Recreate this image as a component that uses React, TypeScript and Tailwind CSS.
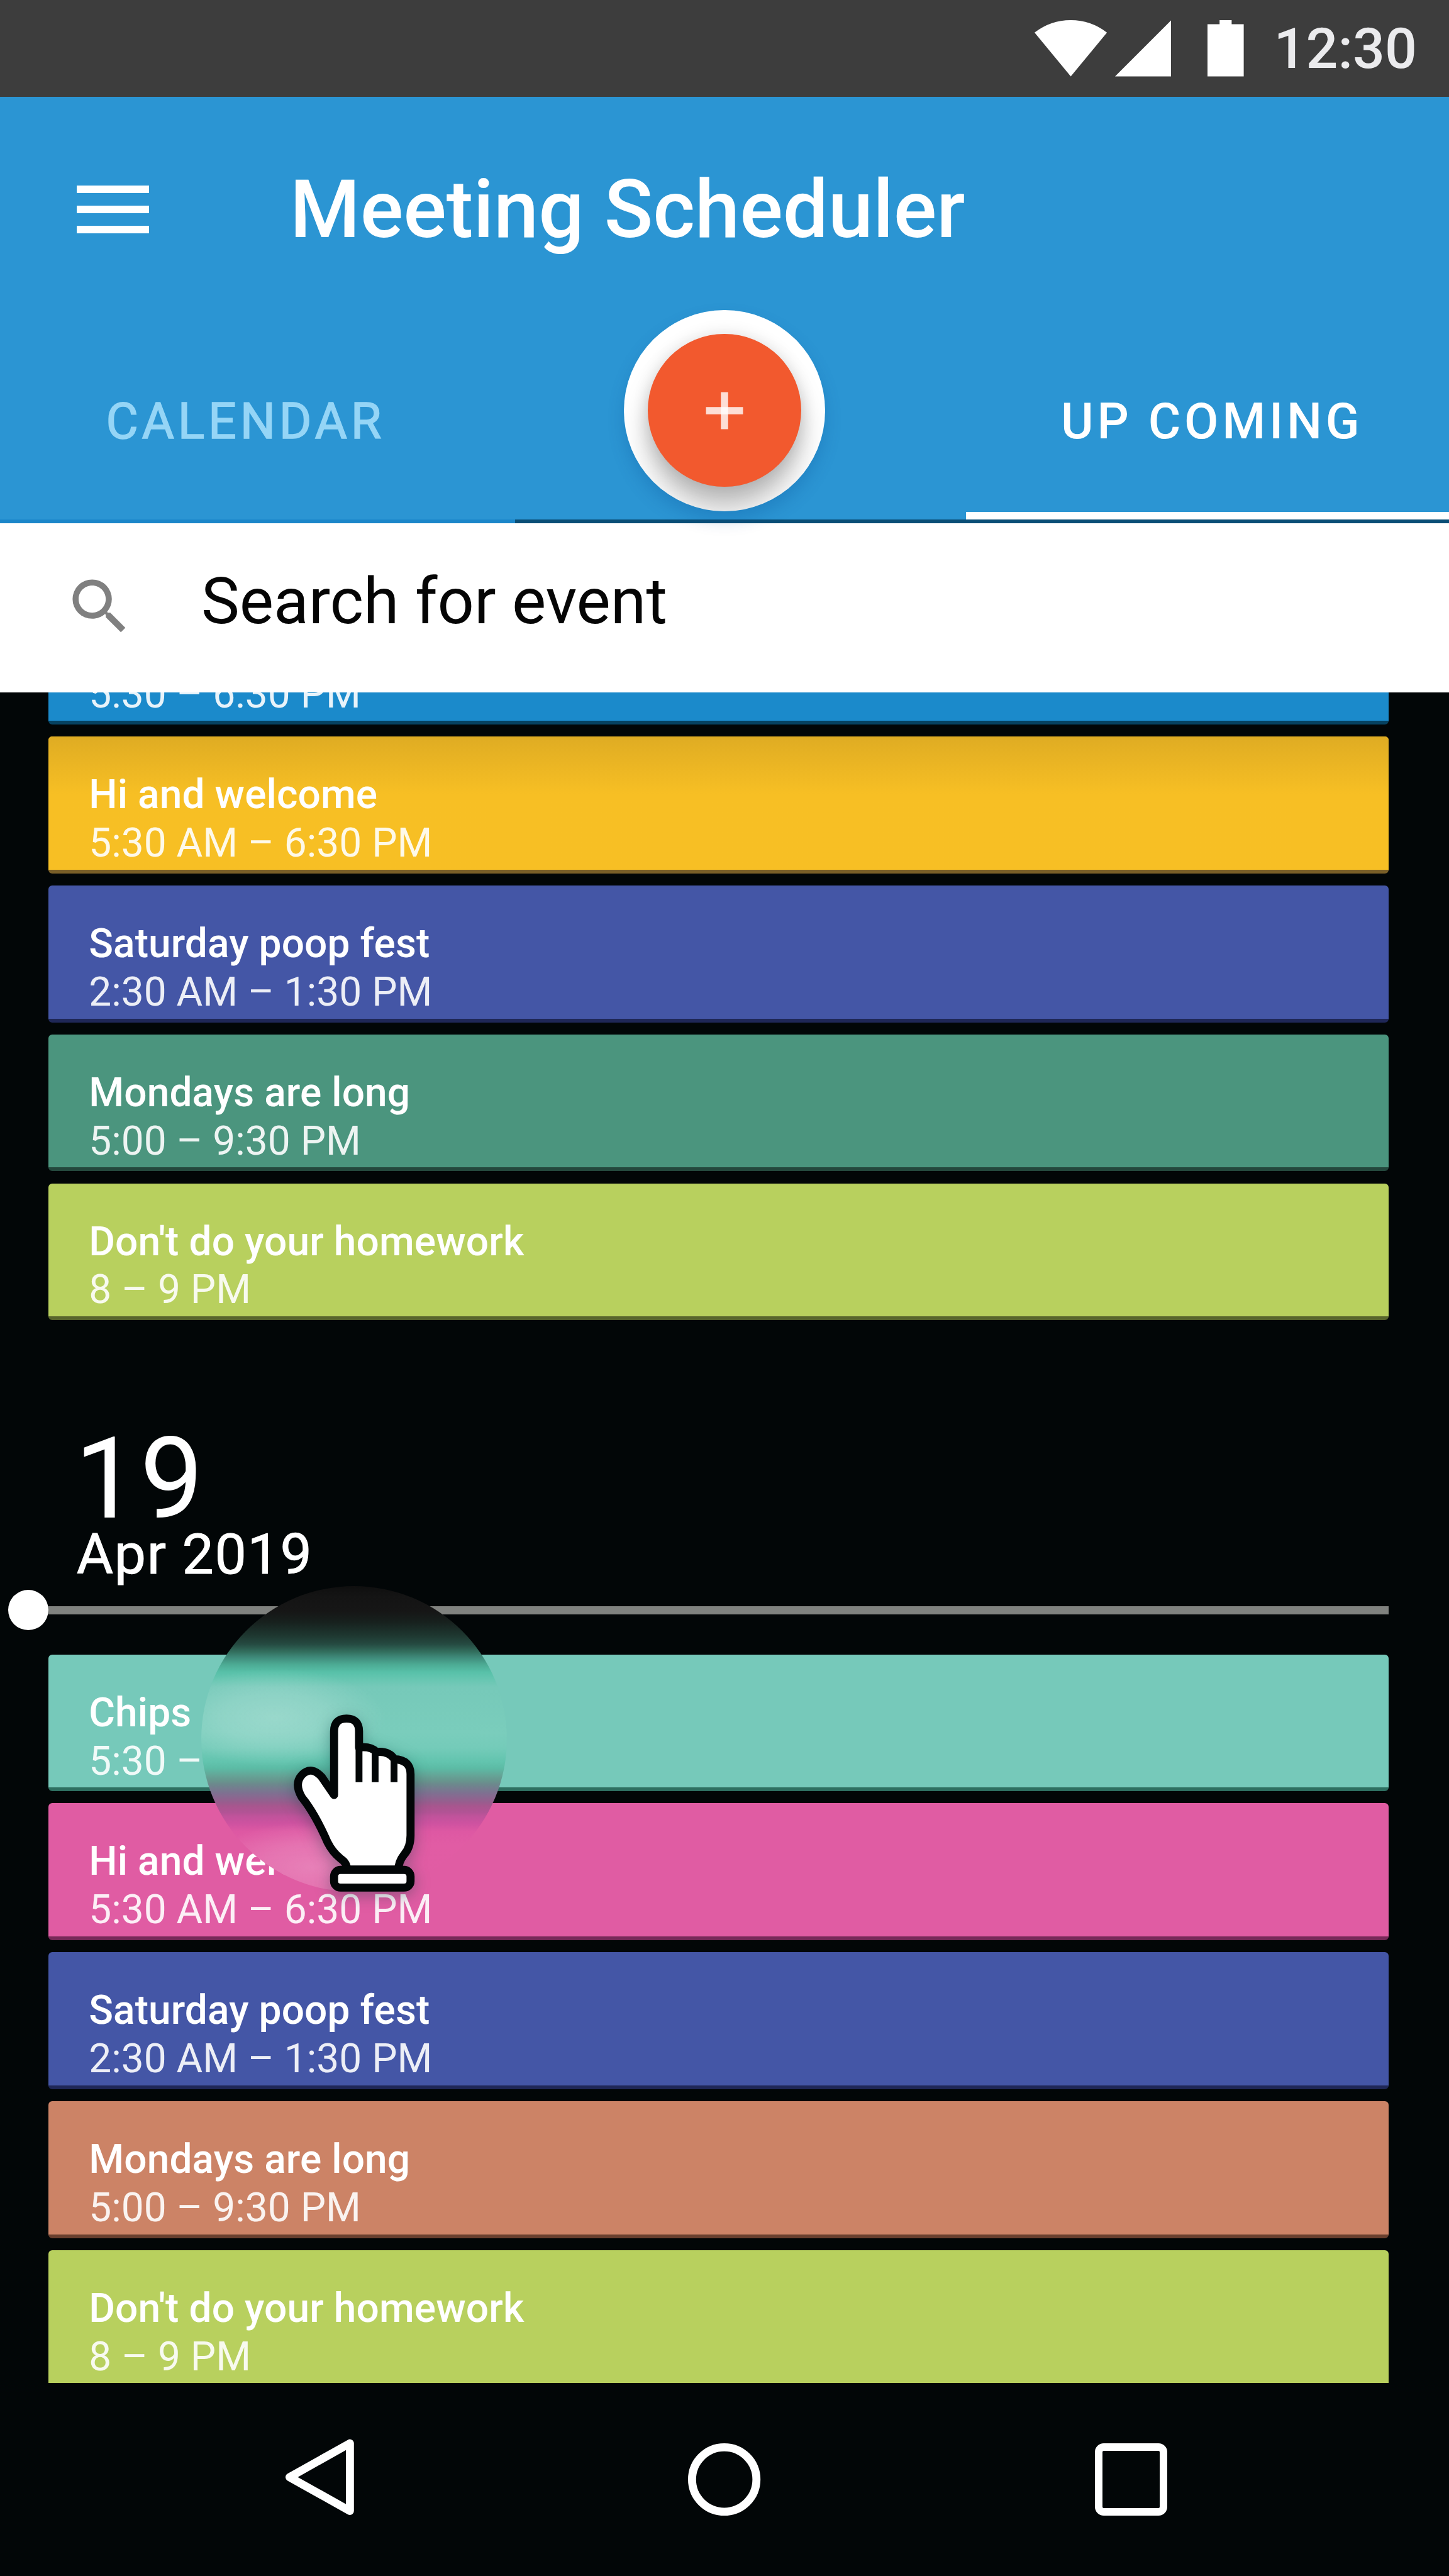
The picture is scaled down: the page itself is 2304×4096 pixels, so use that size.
type Meeting = { title?: string; time: string; tone: string };

const firstDay: Meeting[] = [
  { time: "5:30 – 6:30 PM", tone: "bg-[#1b8acb] border-[#064261]" },
  {
    title: "Hi and welcome",
    time: "5:30 AM – 6:30 PM",
    tone: "bg-[#f7bf24] border-[#7a5f28] bg-linear-to-b from-[#dfac23] via-[#f7bf24] via-42% to-[#f7bf24]",
  },
  { title: "Saturday poop fest", time: "2:30 AM – 1:30 PM", tone: "bg-[#4456a6] border-[#1f2757]" },
  { title: "Mondays are long", time: "5:00 – 9:30 PM", tone: "bg-[#4b957e] border-[#24483d]" },
  { title: "Don't do your homework", time: "8 – 9 PM", tone: "bg-[#b8d05e] border-[#58652c]" },
];

const secondDay: Meeting[] = [
  { title: "Chips", time: "5:30 – 6:30 PM", tone: "bg-[#76c9ba] border-[#2e6f61]" },
  { title: "Hi and welcome", time: "5:30 AM – 6:30 PM", tone: "bg-[#e05ca3] border-[#772958]" },
  { title: "Saturday poop fest", time: "2:30 AM – 1:30 PM", tone: "bg-[#4456a6] border-[#1f2757]" },
  { title: "Mondays are long", time: "5:00 – 9:30 PM", tone: "bg-[#cc8366] border-[#683f2e]" },
  { title: "Don't do your homework", time: "8 – 9 PM", tone: "bg-[#b8d05e] border-[#58652c]" },
];

function MeetingCard({ title, time, tone }: Meeting) {
  return (
    <div
      className={`h-[217.6px] shrink-0 rounded-[6px] border-b-[6.4px] bg-origin-border pt-[55px] pl-[64.4px] text-[64px] leading-[76.8px] whitespace-nowrap text-white ${tone}`}
    >
      <div className="h-[76.8px] font-medium tracking-[0.1px]">{title}</div>
      <div className="text-white/90">{time}</div>
    </div>
  );
}

function StatusBar() {
  return (
    <div className="flex h-[153.6px] shrink-0 items-start bg-[#3d3d3d] pt-[32px] pl-[1644.8px]">
      <svg className="h-[89.6px] w-[115.2px]" viewBox="0 0 18 14" fill="#fff">
        <path d="M9 14 L0 3.1 Q4 0 9 0 T18 3.1 Z" />
      </svg>
      <svg className="ml-[12.8px] h-[89.6px] w-[89.6px]" viewBox="0 0 14 14" fill="#fff">
        <path d="M0 14 L14 0 V14 Z" />
      </svg>
      <svg className="ml-[57.6px] h-[89.6px] w-[57.6px]" viewBox="0 0 9 14" fill="#fff">
        <path d="M0 1 H3 V0 H6 V1 H9 V14 H0 Z" />
      </svg>
      <div className="ml-[48px] pt-[1px] text-[89.6px] leading-[89.6px] font-medium text-[#ebebed]">12:30</div>
    </div>
  );
}

function Header() {
  return (
    <header className="h-[678.4px] shrink-0 bg-[#2b95d3] text-white">
      <div className="flex h-[257px] items-start pt-[103px] pl-[121.6px]">
        <div className="mt-[38px] flex w-[115.2px] flex-col gap-[19.2px]">
          <div className="h-[12.8px] bg-white" />
          <div className="h-[12.8px] bg-white" />
          <div className="h-[12.8px] bg-white" />
        </div>
        <h1 className="ml-[224px] text-[128px] leading-[153.6px] font-medium">Meeting Scheduler</h1>
      </div>
      <div className="grid h-[415px] grid-cols-3 text-[79px] leading-[102.4px] font-medium tracking-[5.7px]">
        <div className="pt-[208px] pl-[168.5px] font-normal text-[#95d5f6] [-webkit-text-stroke:1.5px_#95d5f6]">
          CALENDAR
        </div>
        <div className="flex justify-center pt-[82px]">
          <div className="relative z-10 size-[320px] rounded-full shadow-[0_14px_26px_rgba(0,70,140,0.22)]">
            <div className="flex size-full items-center justify-center overflow-hidden rounded-full bg-white">
              <div className="flex size-[243.2px] items-center justify-center rounded-full bg-[#f2592e] shadow-[0_34px_42px_rgba(0,0,0,0.26),0_0_26px_rgba(0,0,0,0.12)]">
                <svg className="size-[64px]" viewBox="0 0 10 10" fill="#fff" fillOpacity="0.8">
                  <rect x="0.4" y="4.1" width="9.2" height="1.8" />
                  <rect x="4.1" y="0.4" width="1.8" height="9.2" />
                </svg>
              </div>
            </div>
          </div>
        </div>
        <div className="border-b-[12.8px] border-white pt-[208px] pl-[151px]">UP COMING</div>
      </div>
      <div className="flex h-[6.4px]">
        <div className="w-[819.2px] bg-[#1b86c9]" />
        <div className="flex-1 bg-[#0a4e76]" />
      </div>
    </header>
  );
}

function SearchBar() {
  return (
    <div className="flex h-[268.8px] shrink-0 items-start bg-white pl-[100.8px]">
      <svg className="mt-[75px] size-[115.2px]" viewBox="0 0 24 24" fill="#808080">
        <path d="M15.5 14h-.79l-.28-.27A6.471 6.471 0 0 0 16 9.5 6.5 6.5 0 1 0 9.5 16c1.61 0 3.09-.59 4.23-1.57l.27.28v.79l5 4.99L20.49 19l-4.99-5zm-6 0C7.01 14 5 11.99 5 9.5S7.01 5 9.5 5 14 7.01 14 9.5 11.99 14 9.5 14z" />
      </svg>
      <div className="ml-[104px] pt-[60px] text-[102.4px] leading-[128px] text-[#050505]">Search for event</div>
    </div>
  );
}

function NavBar() {
  return (
    <div className="flex flex-1 items-start bg-[#020607] pt-[89.6px] pl-[454.4px]">
      <svg className="h-[121.6px] w-[108.8px]" viewBox="0 0 17 19" fill="none" stroke="#fff" strokeWidth="2" strokeLinejoin="round">
        <path d="M16 1.1 V17.9 L1 9.5 Z" />
      </svg>
      <svg className="mt-[6.4px] ml-[531.2px] size-[115.2px]" viewBox="0 0 18 18" fill="none" stroke="#fff" strokeWidth="2">
        <circle cx="9" cy="9" r="8" />
      </svg>
      <div className="mt-[6.4px] ml-[531.2px] size-[115.2px] rounded-[14px] border-[12.8px] border-white" />
    </div>
  );
}

function TouchPointer() {
  return (
    <>
      <div className="absolute top-[2521.6px] left-[320px] size-[486.4px] rounded-full bg-[radial-gradient(ellipse_36%_16%_at_24%_43%,rgba(255,255,255,0.24),rgba(255,255,255,0.16)_50%,transparent),radial-gradient(ellipse_34%_15%_at_36%_92%,rgba(255,255,255,0.22),rgba(255,255,255,0.14)_50%,transparent),linear-gradient(#0f0f0f,#141414_3.3%,#161616_8.3%,#17211e_11.8%,#1e3730_16.1%,#254a41_19%,#33705f_21.6%,#3d8576_23%,#4caa93_25.6%,#58c1a9_28.2%,#66c6b1_30.4%,#76c9b9_33%,#7acdbc_48%,#74cbb9_53%,#62c4ae_57.5%,#5cbba5_59.6%,#65a396_62.1%,#67968e_63.6%,#6d878d_65%,#7f7091_67.8%,#985d8e_70.7%,#a8568e_72%,#b25395_74%,#c0539b_75.3%,#cd52a0_77.5%,#de58a3_80.3%,#e15ca4_84.6%,#e05ca3)]" />
      <svg
        className="absolute top-[2707.2px] left-[448px] h-[320px] w-[230.4px] drop-shadow-[0_6px_12px_rgba(0,60,60,0.35)]"
        viewBox="70 423 36 50"
        fill="#fff"
        stroke="#020607"
        strokeWidth="2"
        strokeLinejoin="round"
      >
        <path d="M83 446 V430.2 Q83 427 86.1 427 Q89.2 427 89.2 430.2 V434.2 Q92 433.8 93.6 435.3 Q96.6 435 98 437.1 Q102 437.3 102 440.8 V456 Q102 459 100.4 460.8 Q99 462.6 99 464.5 H86.2 Q86.2 462.8 84.6 461.8 Q82.6 460.2 81.4 457.8 Q78.2 450.5 75 446.6 Q73 443.2 75 441 Q77.4 438.6 80 441.6 Z" />
        <path d="M89.2 434 V442.8 M93.2 435 V442.8 M97.9 437 V442.8" fill="none" strokeWidth="1.7" />
        <rect x="83" y="464.6" width="19" height="4.4" rx="1.6" />
      </svg>
    </>
  );
}

export default function App() {
  return (
    <div className="relative flex h-[4096px] w-[2304px] flex-col overflow-hidden bg-[#020607] font-['Roboto',sans-serif]">
      <StatusBar />
      <Header />
      <SearchBar />
      <main className="flex h-[2688px] shrink-0 flex-col overflow-hidden pr-[96px] pl-[76.8px]">
        <section className="mt-[-166.4px] flex shrink-0 flex-col gap-[19.2px]">
          {firstDay.map((m) => (
            <MeetingCard key={m.time} {...m} />
          ))}
        </section>
        <div className="mt-[170px] ml-[42px] text-[179.2px] leading-[166.4px] tracking-[3px] text-white">19</div>
        <div className="mt-[-2px] ml-[45px] text-[89.6px] leading-[76.8px] tracking-[1.6px] text-white [-webkit-text-stroke:1px_white]">
          Apr 2019
        </div>
        <div className="mt-[18px] -ml-[64px] flex shrink-0 items-center">
          <div className="size-[64px] rounded-full bg-white" />
          <div className="h-[12.8px] flex-1 bg-[#80827f]" />
        </div>
        <section className="mt-[38.4px] flex shrink-0 flex-col gap-[19.2px]">
          {secondDay.map((m) => (
            <MeetingCard key={m.title} {...m} />
          ))}
        </section>
      </main>
      <NavBar />
      <TouchPointer />
    </div>
  );
}
